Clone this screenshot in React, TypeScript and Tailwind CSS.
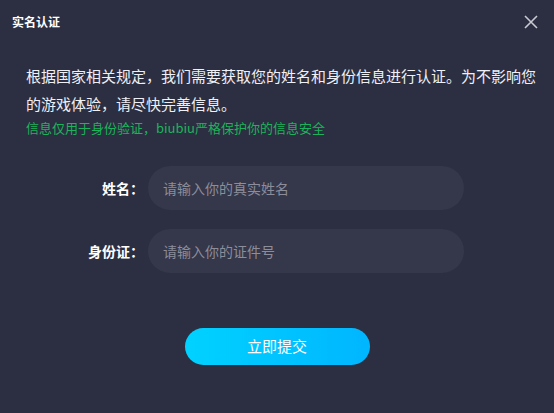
export default function App() {
  const font = { fontFamily: '"Microsoft YaHei", "Noto Sans CJK SC", "Liberation Sans", sans-serif' };
  return (
    <div className="w-[554px] h-[413px] bg-[#2c2e41] flex flex-col overflow-hidden" style={font}>
      <div className="h-[44px] flex items-center justify-between pl-[12px] pr-[16px]">
        <span className="text-[12px] font-bold text-white leading-none">实名认证</span>
        <svg width="14" height="14" viewBox="0 0 14 14" className="text-[#c9cad3]">
          <path d="M1 1L13 13M13 1L1 13" stroke="currentColor" strokeWidth="1.6" fill="none" />
        </svg>
      </div>
      <div className="pl-[26px] pr-[8px] pt-[18px]">
        <p className="text-[15px] leading-[28px] text-[#eef0f6]">
          根据国家相关规定，我们需要获取您的姓名和身份信息进行认证。为不影响您的游戏体验，请尽快完善信息。
        </p>
        <p className="text-[13px] leading-[18px] text-[#1db35b] mt-[1px]">
          信息仅用于身份验证，biubiu严格保护你的信息安全
        </p>
      </div>
      <div className="flex flex-col gap-[19px] mt-[29px]">
        <div className="flex items-center">
          <label className="w-[148px] pr-[4px] text-right text-[14px] font-bold text-white">姓名：</label>
          <div className="w-[316px] h-[44px] rounded-full bg-[#35374a] flex items-center pl-[15px] text-[14px] text-[#8b8d9a]">
            请输入你的真实姓名
          </div>
        </div>
        <div className="flex items-center">
          <label className="w-[148px] pr-[4px] text-right text-[14px] font-bold text-white">身份证：</label>
          <div className="w-[316px] h-[44px] rounded-full bg-[#35374a] flex items-center pl-[15px] text-[14px] text-[#8b8d9a]">
            请输入你的证件号
          </div>
        </div>
      </div>
      <div className="flex justify-center mt-[55px]">
        <button className="w-[185px] h-[37px] rounded-full bg-gradient-to-r from-[#00d2ff] to-[#00b6ff] text-white text-[15px]">
          立即提交
        </button>
      </div>
    </div>
  );
}
